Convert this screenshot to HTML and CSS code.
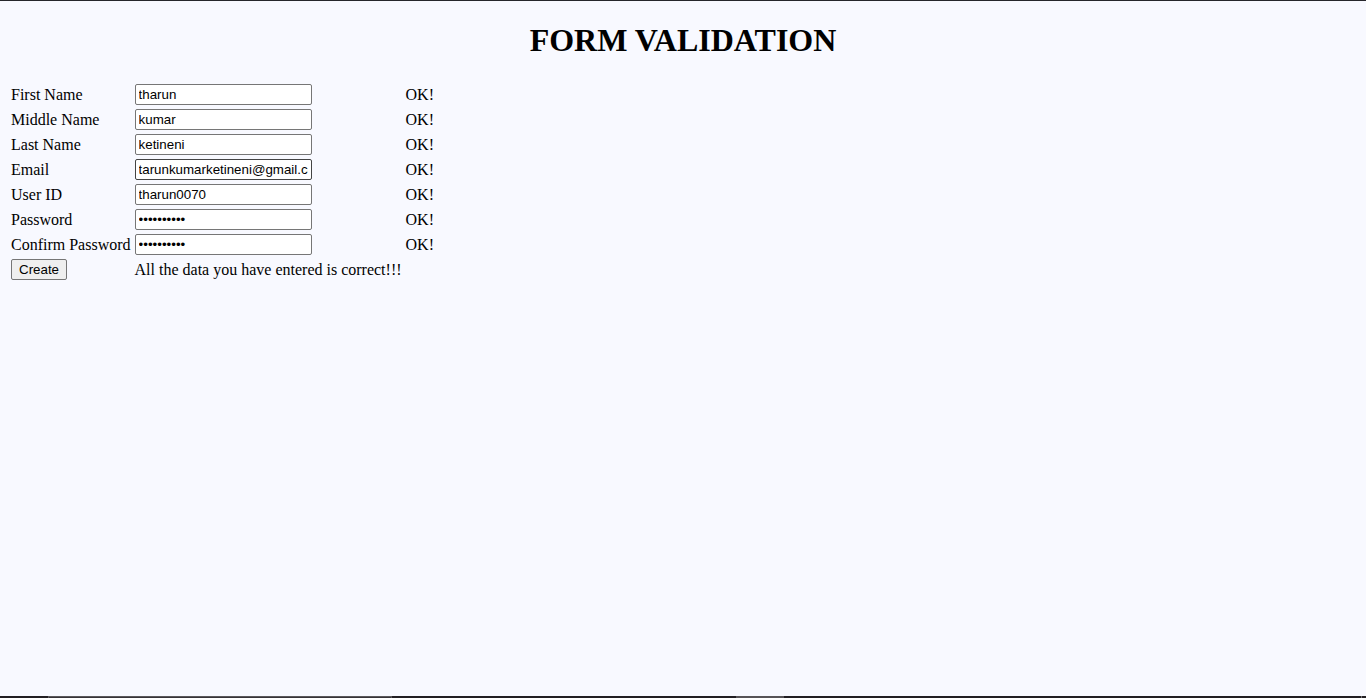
FILE: index.html
```html
<!DOCTYPE html>
<html lang="en">
<head>
<meta charset="utf-8">
<title>Form Validation</title>
<link rel="stylesheet" href="styles.css">
</head>
<body class="page">
<main class="content">
<h1 class="title">FORM VALIDATION</h1>
<form class="form">
<table class="fields">
<tr><td><label for="first">First Name</label></td><td><input class="field" id="first" type="text" value="tharun"></td><td>OK!</td></tr>
<tr><td><label for="middle">Middle Name</label></td><td><input class="field" id="middle" type="text" value="kumar"></td><td>OK!</td></tr>
<tr><td><label for="last">Last Name</label></td><td><input class="field" id="last" type="text" value="ketineni"></td><td>OK!</td></tr>
<tr><td><label for="email">Email</label></td><td><input class="field field-active" id="email" type="text" value="tarunkumarketineni@gmail.com"></td><td>OK!</td></tr>
<tr><td><label for="user">User ID</label></td><td><input class="field" id="user" type="text" value="tharun0070"></td><td>OK!</td></tr>
<tr><td><label for="pass">Password</label></td><td><input class="field" id="pass" type="password" value="tharun0070"></td><td>OK!</td></tr>
<tr><td><label for="confirm">Confirm Password</label></td><td><input class="field" id="confirm" type="password" value="tharun0070"></td><td>OK!</td></tr>
<tr><td><button class="create" type="button">Create</button></td><td>All the data you have entered is correct!!!</td><td></td></tr>
</table>
</form>
</main>
<div class="taskbar" aria-hidden="true">
<span class="taskbar-start"></span>
<span class="taskbar-search"></span>
<span class="taskbar-apps"></span>
<span class="taskbar-current"></span>
<span class="taskbar-tray"></span>
</div>
</body>
</html>
```

FILE: styles.css
```css
.page {
  box-sizing: border-box;
  display: flex;
  flex-direction: column;
  min-height: 100vh;
  margin: 0;
  border-top: 1px solid #26262b;
  background: #f8f9ff;
  color: #000;
  font: 16px "Liberation Serif", "Times New Roman", serif;
}

.content {
  flex: 1;
  padding: 0 8px;
}

.title {
  margin: 0;
  padding: 21px 0 22px;
  font-size: 32px;
  line-height: 37px;
  text-align: center;
}

.fields {
  border-spacing: 2px;
}

.fields td {
  padding: 1px;
  line-height: 18px;
  white-space: nowrap;
}

.field,
.create {
  box-sizing: border-box;
  display: block;
  height: 21px;
  border: 1px solid #767676;
  border-radius: 2px;
  color: #000;
  font-family: "Liberation Sans", Arial, sans-serif;
}

.field {
  width: 177px;
  padding: 1px 3px;
  background: #fff;
}

.field-active {
  border-color: #444;
}

.create {
  padding: 1px 7px;
  background: #efefef;
}

.taskbar {
  display: flex;
  height: 2px;
  background: #221f23;
}

.taskbar-start {
  width: 48px;
}

.taskbar-search {
  box-sizing: border-box;
  width: 344px;
  border: 1px solid #5a585b;
  border-bottom: 0;
  background: #373438;
}

.taskbar-apps {
  width: 344px;
}

.taskbar-current {
  width: 48px;
  background: #575457;
}

.taskbar-tray {
  flex: 1;
  margin-right: 4px;
  border-right: 1px solid #777578;
}
```
